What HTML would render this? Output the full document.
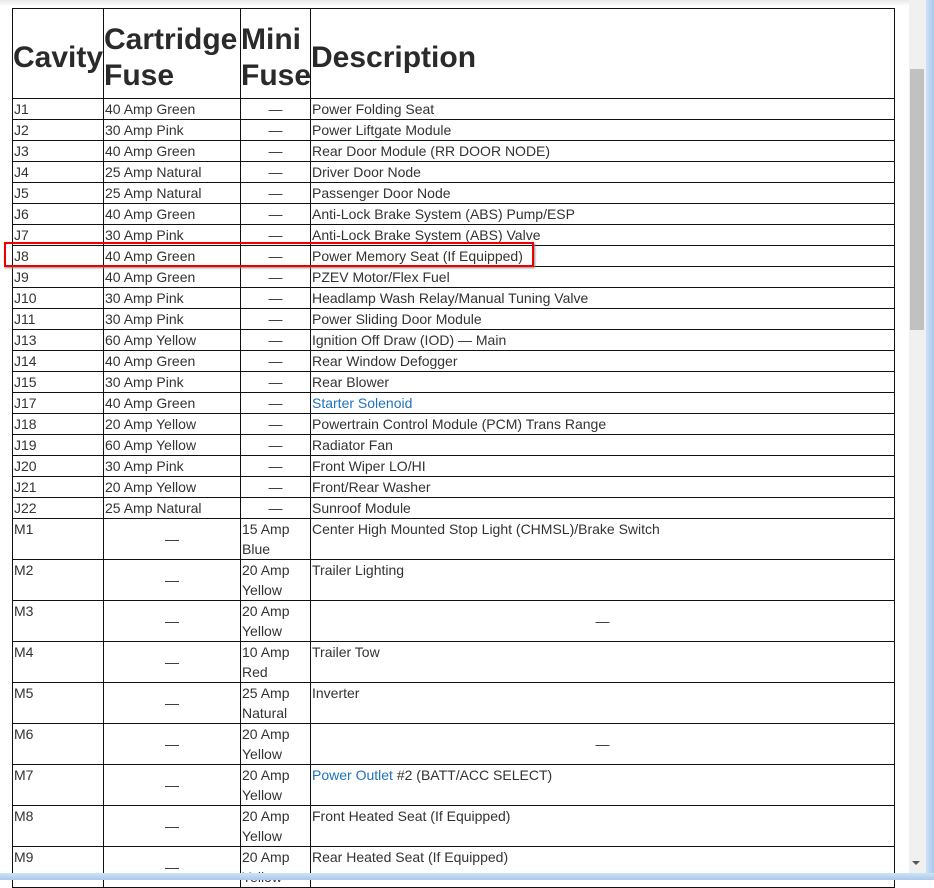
<!DOCTYPE html>
<html><head><meta charset="utf-8"><style>
body{margin:0;width:934px;height:880px;overflow:hidden;background:#fff;font-family:"Liberation Sans",sans-serif;color:#333;position:relative}
.top{position:absolute;left:0;top:0;width:926px;height:6px;background:linear-gradient(#e8e8e8,#fff)}
table{position:absolute;left:12px;top:8px;border-collapse:collapse;table-layout:fixed;width:882px}
td,th{border:1px solid #111;padding:0 1px;font-size:14px;line-height:20px;vertical-align:top;text-align:left;overflow:hidden;white-space:nowrap}
th{font-size:30px;line-height:36px;font-weight:bold;vertical-align:middle;height:81px;padding:8px 0 0 0;white-space:normal;color:#2a2a2a}
tr.j td{height:20px}
tr.m td{height:40px;white-space:normal}
td.c{text-align:center}
tr.m td.c{vertical-align:middle}
a{color:#1e73be;text-decoration:none}
.red{position:absolute;left:4px;top:242px;width:526px;height:21px;border:2px solid #e00;box-shadow:1px 1px 2px #888}
.sb{position:absolute;left:909px;top:0;width:17px;height:873px;background:#f0f0f0}
.thumb{position:absolute;left:910px;top:69px;width:14px;height:261px;background:#c1c1c1}
.rb{position:absolute;left:926px;top:0;width:8px;height:880px;background:linear-gradient(90deg,#cfe3f7,#a9c8ec)}
.bb{position:absolute;left:0;top:873px;width:934px;height:7px;background:linear-gradient(#cfe3f7,#a9c8ec)}
.arr{position:absolute;left:912px;top:861px;width:0;height:0;border-left:4px solid transparent;border-right:4px solid transparent;border-top:4px solid #555}
</style></head><body>
<div class="top"></div>
<table>
<colgroup><col style="width:91px"><col style="width:137px"><col style="width:70px"><col style="width:584px"></colgroup>
<tr><th>Cavity</th><th>Cartridge Fuse</th><th>Mini Fuse</th><th>Description</th></tr>
<tr class="j"><td>J1</td><td>40 Amp Green</td><td class="c">—</td><td>Power Folding Seat</td></tr>
<tr class="j"><td>J2</td><td>30 Amp Pink</td><td class="c">—</td><td>Power Liftgate Module</td></tr>
<tr class="j"><td>J3</td><td>40 Amp Green</td><td class="c">—</td><td>Rear Door Module (RR DOOR NODE)</td></tr>
<tr class="j"><td>J4</td><td>25 Amp Natural</td><td class="c">—</td><td>Driver Door Node</td></tr>
<tr class="j"><td>J5</td><td>25 Amp Natural</td><td class="c">—</td><td>Passenger Door Node</td></tr>
<tr class="j"><td>J6</td><td>40 Amp Green</td><td class="c">—</td><td>Anti-Lock Brake System (ABS) Pump/ESP</td></tr>
<tr class="j"><td>J7</td><td>30 Amp Pink</td><td class="c">—</td><td>Anti-Lock Brake System (ABS) Valve</td></tr>
<tr class="j"><td>J8</td><td>40 Amp Green</td><td class="c">—</td><td>Power Memory Seat (If Equipped)</td></tr>
<tr class="j"><td>J9</td><td>40 Amp Green</td><td class="c">—</td><td>PZEV Motor/Flex Fuel</td></tr>
<tr class="j"><td>J10</td><td>30 Amp Pink</td><td class="c">—</td><td>Headlamp Wash Relay/Manual Tuning Valve</td></tr>
<tr class="j"><td>J11</td><td>30 Amp Pink</td><td class="c">—</td><td>Power Sliding Door Module</td></tr>
<tr class="j"><td>J13</td><td>60 Amp Yellow</td><td class="c">—</td><td>Ignition Off Draw (IOD) — Main</td></tr>
<tr class="j"><td>J14</td><td>40 Amp Green</td><td class="c">—</td><td>Rear Window Defogger</td></tr>
<tr class="j"><td>J15</td><td>30 Amp Pink</td><td class="c">—</td><td>Rear Blower</td></tr>
<tr class="j"><td>J17</td><td>40 Amp Green</td><td class="c">—</td><td><a>Starter Solenoid</a></td></tr>
<tr class="j"><td>J18</td><td>20 Amp Yellow</td><td class="c">—</td><td>Powertrain Control Module (PCM) Trans Range</td></tr>
<tr class="j"><td>J19</td><td>60 Amp Yellow</td><td class="c">—</td><td>Radiator Fan</td></tr>
<tr class="j"><td>J20</td><td>30 Amp Pink</td><td class="c">—</td><td>Front Wiper LO/HI</td></tr>
<tr class="j"><td>J21</td><td>20 Amp Yellow</td><td class="c">—</td><td>Front/Rear Washer</td></tr>
<tr class="j"><td>J22</td><td>25 Amp Natural</td><td class="c">—</td><td>Sunroof Module</td></tr>
<tr class="m"><td>M1</td><td class="c">—</td><td>15 Amp Blue</td><td>Center High Mounted Stop Light (CHMSL)/Brake Switch</td></tr>
<tr class="m"><td>M2</td><td class="c">—</td><td>20 Amp Yellow</td><td>Trailer Lighting</td></tr>
<tr class="m"><td>M3</td><td class="c">—</td><td>20 Amp Yellow</td><td class="c">—</td></tr>
<tr class="m"><td>M4</td><td class="c">—</td><td>10 Amp Red</td><td>Trailer Tow</td></tr>
<tr class="m"><td>M5</td><td class="c">—</td><td>25 Amp Natural</td><td>Inverter</td></tr>
<tr class="m"><td>M6</td><td class="c">—</td><td>20 Amp Yellow</td><td class="c">—</td></tr>
<tr class="m"><td>M7</td><td class="c">—</td><td>20 Amp Yellow</td><td><a>Power Outlet</a> #2 (BATT/ACC SELECT)</td></tr>
<tr class="m"><td>M8</td><td class="c">—</td><td>20 Amp Yellow</td><td>Front Heated Seat (If Equipped)</td></tr>
<tr class="m"><td>M9</td><td class="c">—</td><td>20 Amp Yellow</td><td>Rear Heated Seat (If Equipped)</td></tr>
</table>
<div class="red"></div>
<div class="sb"></div><div class="thumb"></div><div class="arr"></div>
<div class="rb"></div><div class="bb"></div>
</body></html>
